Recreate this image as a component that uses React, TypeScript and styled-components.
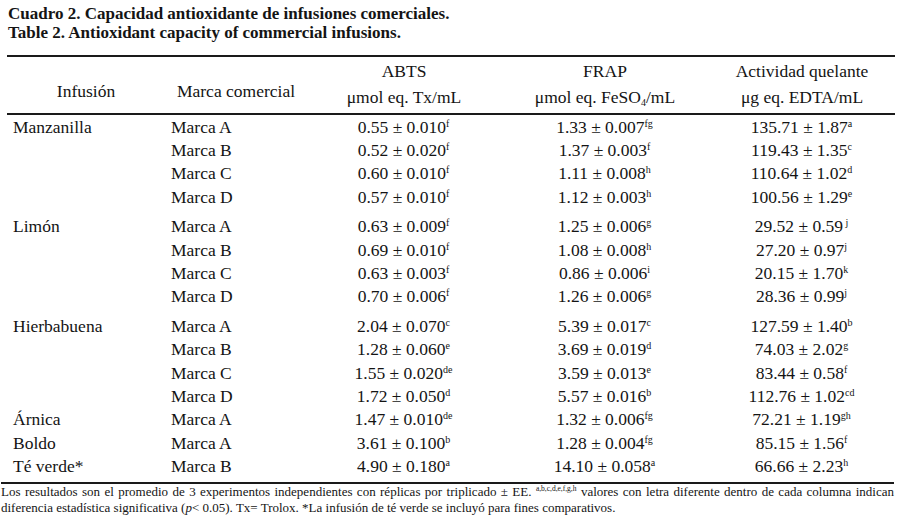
import React from "react";
import styled, { createGlobalStyle } from "styled-components";

const Global = createGlobalStyle`
  html, body { margin: 0; padding: 0; background: #ffffff; }
  body { font-family: "Liberation Serif", "Times New Roman", serif; color: #141414; }
`;

const Page = styled.div`
  width: 905px;
  height: 520px;
  box-sizing: border-box;
  padding: 4px 10px 0 7px;
  overflow: hidden;
`;

const Caption = styled.div`
  font-weight: bold;
  font-size: 17px;
  line-height: 19px;
  padding-left: 1px;
  margin-bottom: 13px;
  white-space: nowrap;
`;

const Table = styled.table`
  width: 888px;
  border-collapse: collapse;
  table-layout: fixed;
  font-size: 17.5px;
`;

const HeadRow = styled.tr`
  border-top: 2px solid #1a1a1a;
  border-bottom: 2px solid #1a1a1a;
`;

const Th = styled.th<{ $w: number }>`
  width: ${(p) => p.$w}px;
  font-weight: normal;
  text-align: center;
  line-height: 26px;
  padding: 1px 0 3px;
  vertical-align: bottom;
  white-space: nowrap;
`;

const SideTh = styled(Th)`
  padding-bottom: 9px;
`;

const Row = styled.tr<{ $top?: number; $bottom?: number }>`
  & > td {
    padding-top: ${(p) => p.$top ?? 0}px;
    padding-bottom: ${(p) => p.$bottom ?? 0}px;
  }
`;

const Td = styled.td<{ $align?: "left" | "center"; $indent?: number }>`
  line-height: 23.4px;
  text-align: ${(p) => p.$align ?? "center"};
  padding-left: ${(p) => p.$indent ?? 0}px;
  white-space: nowrap;
`;

const Sup = styled.sup`
  font-size: 10px;
  line-height: 0;
  vertical-align: 6px;
`;

const Sub = styled.sub`
  font-size: 10px;
  line-height: 0;
  vertical-align: -3px;
`;

const Footer = styled.div`
  margin-left: -6px;
  width: 893px;
  border-top: 2px solid #1a1a1a;
  font-size: 13px;
  line-height: 16px;
`;

const JustLine = styled.div`
  text-align: justify;
  text-align-last: justify;
  white-space: nowrap;
`;

const PlainLine = styled.div`
  white-space: nowrap;
`;

const TinySup = styled.sup`
  font-size: 7.5px;
  line-height: 0;
  vertical-align: 5px;
`;

type Val = [string, string];
type Entry = {
  inf?: string;
  marca: string;
  abts: Val;
  frap: Val;
  quel: Val;
  top?: number;
  bottom?: number;
};

const rows: Entry[] = [
  { inf: "Manzanilla", marca: "Marca A", abts: ["0.55 ± 0.010", "f"], frap: ["1.33 ± 0.007", "fg"], quel: ["135.71 ± 1.87", "a"], top: 0.5 },
  { marca: "Marca B", abts: ["0.52 ± 0.020", "f"], frap: ["1.37 ± 0.003", "f"], quel: ["119.43 ± 1.35", "c"] },
  { marca: "Marca C", abts: ["0.60 ± 0.010", "f"], frap: ["1.11 ± 0.008", "h"], quel: ["110.64 ± 1.02", "d"] },
  { marca: "Marca D", abts: ["0.57 ± 0.010", "f"], frap: ["1.12 ± 0.003", "h"], quel: ["100.56 ± 1.29", "e"] },
  { inf: "Limón", marca: "Marca A", abts: ["0.63 ± 0.009", "f"], frap: ["1.25 ± 0.006", "g"], quel: ["29.52 ± 0.59", " j"], top: 6 },
  { marca: "Marca B", abts: ["0.69 ± 0.010", "f"], frap: ["1.08 ± 0.008", "h"], quel: ["27.20 ± 0.97", "j"] },
  { marca: "Marca C", abts: ["0.63 ± 0.003", "f"], frap: ["0.86 ± 0.006", "i"], quel: ["20.15 ± 1.70", "k"] },
  { marca: "Marca D", abts: ["0.70 ± 0.006", "f"], frap: ["1.26 ± 0.006", "g"], quel: ["28.36 ± 0.99", "j"] },
  { inf: "Hierbabuena", marca: "Marca A", abts: ["2.04 ± 0.070", "c"], frap: ["5.39 ± 0.017", "c"], quel: ["127.59 ± 1.40", "b"], top: 6 },
  { marca: "Marca B", abts: ["1.28 ± 0.060", "e"], frap: ["3.69 ± 0.019", "d"], quel: ["74.03 ± 2.02", "g"] },
  { marca: "Marca C", abts: ["1.55 ± 0.020", "de"], frap: ["3.59 ± 0.013", "e"], quel: ["83.44 ± 0.58", "f"] },
  { marca: "Marca D", abts: ["1.72 ± 0.050", "d"], frap: ["5.57 ± 0.016", "b"], quel: ["112.76 ± 1.02", "cd"] },
  { inf: "Árnica", marca: "Marca A", abts: ["1.47 ± 0.010", "de"], frap: ["1.32 ± 0.006", "fg"], quel: ["72.21 ± 1.19", "gh"] },
  { inf: "Boldo", marca: "Marca A", abts: ["3.61 ± 0.100", "b"], frap: ["1.28 ± 0.004", "fg"], quel: ["85.15 ± 1.56", "f"] },
  { inf: "Té verde*", marca: "Marca B", abts: ["4.90 ± 0.180", "a"], frap: ["14.10 ± 0.058", "a"], quel: ["66.66 ± 2.23", "h"], bottom: 3 },
];

const Value = ({ v }: { v: Val }) => (
  <>
    {v[0]}
    <Sup>{v[1]}</Sup>
  </>
);

export default function App() {
  return (
    <>
      <Global />
      <Page>
        <Caption>
          <div>Cuadro 2. Capacidad antioxidante de infusiones comerciales.</div>
          <div>Table 2. Antioxidant capacity of commercial infusions.</div>
        </Caption>
        <Table>
          <thead>
            <HeadRow>
              <SideTh $w={158}>Infusión</SideTh>
              <SideTh $w={142}>Marca comercial</SideTh>
              <Th $w={194}>
                ABTS
                <br />
                μmol eq. Tx/mL
              </Th>
              <Th $w={208}>
                FRAP
                <br />
                μmol eq. FeSO<Sub>4</Sub>/mL
              </Th>
              <Th $w={186}>
                Actividad quelante
                <br />
                μg eq. EDTA/mL
              </Th>
            </HeadRow>
          </thead>
          <tbody>
            {rows.map((r, i) => (
              <Row key={i} $top={r.top} $bottom={r.bottom}>
                <Td $align="left" $indent={6}>{r.inf ?? ""}</Td>
                <Td $align="left" $indent={6}>{r.marca}</Td>
                <Td><Value v={r.abts} /></Td>
                <Td><Value v={r.frap} /></Td>
                <Td><Value v={r.quel} /></Td>
              </Row>
            ))}
          </tbody>
        </Table>
        <Footer>
          <JustLine>
            Los resultados son el promedio de 3 experimentos independientes con réplicas por triplicado ± EE.{" "}
            <TinySup>a,b,c,d,e,f,g,h</TinySup> valores con letra diferente dentro de cada columna indican
          </JustLine>
          <PlainLine>
            diferencia estadística significativa (<i>p</i>&lt; 0.05). Tx= Trolox. *La infusión de té verde se incluyó para fines comparativos.
          </PlainLine>
        </Footer>
      </Page>
    </>
  );
}
